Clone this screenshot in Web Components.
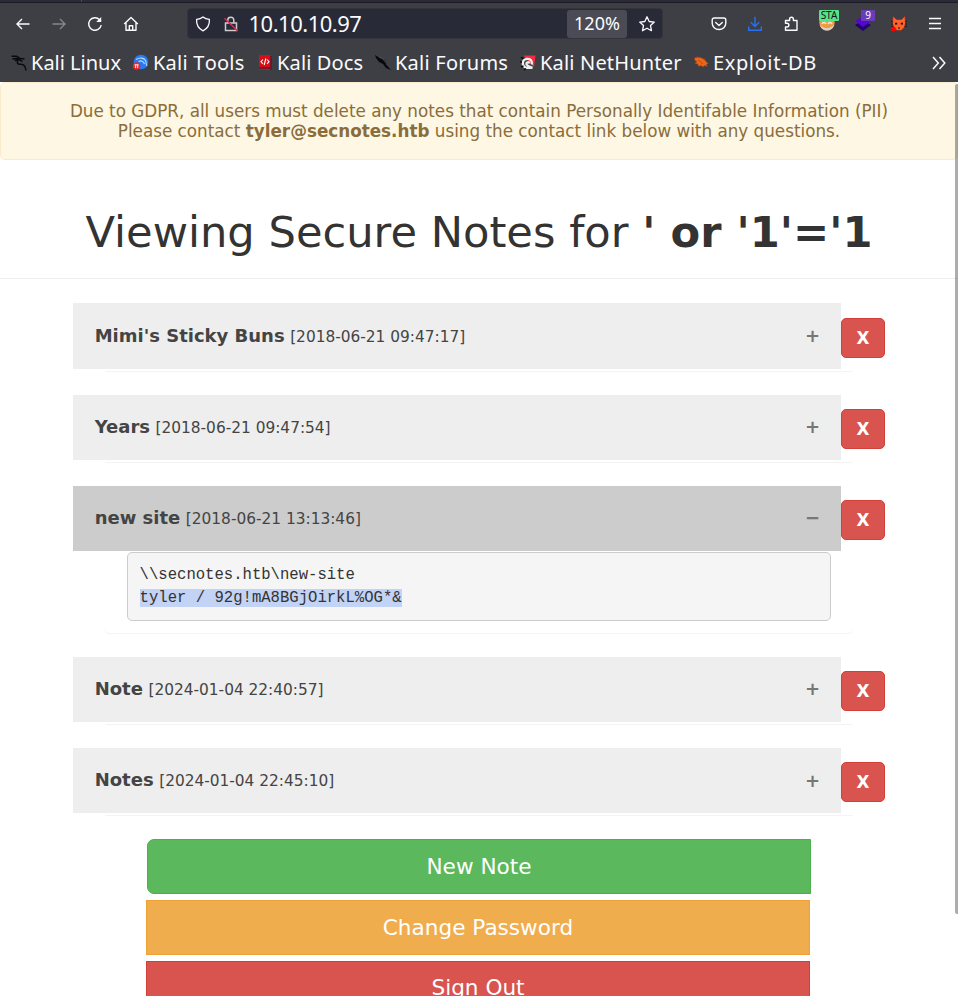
<!DOCTYPE html>
<html lang="en">
<head>
<meta charset="utf-8">
<title>Secure Notes</title>
<style>
html,body{margin:0;height:100%;overflow:hidden;background:#fff}
body{font-family:"DejaVu Sans",sans-serif}
</style>
</head>
<body>
<notes-app></notes-app>
<script>
const define=(name,html,setup)=>customElements.define(name,class extends HTMLElement{
  connectedCallback(){
    if(this.shadowRoot)return;
    const t=document.createElement('template');
    t.innerHTML=html;
    const content=t.content.cloneNode(true);
    if(setup)setup(this,content);
    this.attachShadow({mode:'open'}).append(content);
  }
});

const icons={
  back:'<path d="M14.5 8H2M7 3L2 8l5 5"/>',
  forward:'<path d="M1.5 8H14M9 3l5 5-5 5"/>',
  reload:'<path d="M14.2 9A6.3 6.3 0 1 1 12.6 3.7L14 5"/><path d="M14.2 1v5h-5z" fill="currentColor" stroke="none"/>',
  home:'<path d="M1.2 8L8 1.5 14.8 8M3 6.8V14.2H13V6.8M6.3 14V9.8h3.4V14" stroke-linejoin="round"/>',
  shield:'<path d="M8 .9C6 2.6 4 3.1 1.6 3.3C1.2 9.5 4.2 13 8 14.9C11.8 13 14.8 9.5 14.4 3.3C12 3.1 10 2.6 8 .9Z" stroke-linejoin="round" stroke-width="1.3"/>',
  lock:'<path d="M4.8 6.5V4.4a3 3 0 0 1 6-.4v2.5M2.5 7h11v7.5h-11z" stroke="#ccc" stroke-width="1.5"/><path d="M1.5 2.2l13 12.6" stroke="#e22850" stroke-width="1.5"/>',
  star:'<path d="M8 .8l2.2 4.7 5.1.6-3.8 3.5 1 5.1L8 12.2l-4.5 2.5 1-5.1L.7 6.1l5.1-.6z" stroke-linejoin="round" stroke-width="1.3"/>',
  pocket:'<path d="M3.2 2h9.6a2 2 0 0 1 2 2v3.2a6.8 6.3 0 0 1-13.6 0V4a2 2 0 0 1 2-2zM4.7 6.4L8 9.5l3.3-3.1" stroke-linejoin="round" stroke-linecap="round"/>',
  download:'<path d="M8 .8v9.7M3.8 6.3L8 10.5l4.2-4.2M1.7 10.5v3.7h12.6v-3.7"/>',
  puzzle:'<path d="M2.5 14.3V11H4a1.8 1.8 0 0 0 0-3.8H2.5V4.5H6.6V3.2a1.9 1.9 0 0 1 3.8 0V4.5H14v9.8z" stroke-linejoin="round"/>',
  menu:'<path d="M2 2.5h12M2 7.5h12M2 12.5h12" stroke-width="1.3"/>',
  more:'<path d="M2 2l5.3 6L2 14M8.500 2l5.300 6-5.300 6" stroke-width="1.500"/>',
  face:'<circle cx="8" cy="6.8" r="7.7" fill="#ee9b48" stroke="none"/><path d="M1 8.500c1.500 8 12.500 8 14 0-3.500 5-10.500 5-14 0z" fill="#d8d4ca" stroke="none"/><path d="M3 8c1-2 3-2 4 0M9 8c1-2 3-2 4 0" stroke="#f7e9d1"/>',
  layers:'<path d="M8 4.5l8 4.5-8 6-8-6z" fill="#21006f" stroke="none"/><path d="M8 0l8 5-8 6-8-6z" fill="#5707cc" stroke="none"/>',
  fox:'<path d="M2 0l3.500 3.500h5L14 0l.5 7.500L13 12l-3 2.500H6L3 12 1.500 7.500z" fill="#ff622d" stroke="#7d2915" stroke-width=".6"/><path d="M4 6.800h2.200v1.700H4zM9.800 6.800H12v1.700H9.800zM7 11.500h2v1H7z" fill="#111" stroke="none"/><path d="M0 5l2 1M0 8h2M0 10.500h2M16 5l-2 1M14 8h2M14 10.500h2" stroke="#151515" stroke-width=".8"/><circle cx="2.3" cy="13" r="2.5" fill="red" stroke="none"/>',
  linux:'<path d="M.5 1.200h5l3.500 2.300 4.500.3M1.500 4l4-.5 2.500 1M4 6c2.500-2 5-1.500 7.500.5M7 5.500c-2 2.500 0 4 3 3.800 3 0 4.500 2 5 6.200" fill="none" stroke="#08090c" stroke-width="1.5"/>',
  forums:'<path d="M0 0l4 2.500 3 1 3 2 1 4 5 5.500-5-2-3-4-4-2-3-4z" fill="#07080a" stroke="none"/><path d="M4 2l4 2 2 3" stroke="#596368" stroke-width=".7"/>',
  tools:'<circle cx="8" cy="7" r="7.300" fill="#267bf2" stroke="none"/><path d="M3 4.500c4-2.500 8-1.500 9.500 1 1 2 0 3 1.500 5.500M5.500 6.500c3-1.500 5 0 6 2.500" stroke="#b9dcff" stroke-width="1.1"/><circle cx="3.600" cy="11" r="3.800" fill="#ee2830" stroke="none"/><path d="M1.600 9.800h4M2.600 9.800v3.200M4.700 9.800v3.200" stroke="#fff" stroke-width=".9"/>',
  docs:'<path d="M2 0h12v15H2z" fill="#d90e14" stroke="none"/><path d="M14 1v14M2 13h12" stroke="#5b1833"/><path d="M6 4.500l-2 2.200L6 9M10 4.500l2 2.200L10 9M8.800 3.500L7.200 10" stroke="#fff" stroke-width="1.1"/>',
  nethunter:'<path d="M3.500.5h12L14 12 9 7z" fill="#f12c3d" stroke="none"/><path d="M12.500 12.800H6C1.500 11 2 5 6 4c4-.8 6.500 1.500 6 5.500M9.500 8.500c-.5-2-3.500-1.500-3 .8.3 1.700 3 2.500 6 3.500" stroke="#eee" stroke-width="2.300"/><path d="M1 2.500l2.500 1M0 7h2M1 12l2.500-1M4 15l2-1.500" stroke="#12070b"/>',
  exploit:'<path d="M1.500 3l3.500-.7C9 2.500 12 4.500 13.500 7.200l1.800 1.400-2 .7.8 2-3-.9-1 1.700-2-1.700-2.500.8-.8-2.200L2 8.300l2-1.700-2-1z" fill="#ed6516" stroke="#a64c25" stroke-width=".5"/><path d="M5 5l5 4M4 1l1 2M12 3l-1 2" stroke="#a74413" stroke-width=".7"/>'
};
define('ui-icon','<style>:host{display:block;width:16px;height:16px;flex:none}svg{display:block;width:100%;height:100%;overflow:visible}</style><svg viewBox="0 0 16 16" fill="none" stroke="currentColor" stroke-width="1.4"></svg>',
  (el,r)=>{r.querySelector('svg').innerHTML=icons[el.getAttribute('name')]});

define('book-mark',`<style>:host{display:flex;align-items:center;gap:4px;font-size:20px;white-space:nowrap;line-height:28px}</style><ui-icon></ui-icon><span><slot></slot></span>`,
  (el,r)=>r.querySelector('ui-icon').setAttribute('name',el.getAttribute('icon')));

define('ext-icon',`<style>:host{display:block;position:relative;width:16px;height:16px;flex:none}
span{position:absolute;top:-6px;left:var(--left);height:11px;width:var(--w);border-radius:1px;box-sizing:border-box;background:var(--badge);color:var(--ink);font:10px/11px "Noto Sans",sans-serif;text-align:center}</style><ui-icon></ui-icon><span><slot></slot></span>`,
  (el,r)=>r.querySelector('ui-icon').setAttribute('name',el.getAttribute('icon')));

define('browser-chrome',`<style>
:host{display:flex;flex-direction:column;height:82px;box-sizing:border-box;background:#3e3f44;color:#fbfbfe;font-family:"Noto Sans",sans-serif;font-kerning:none}
.tabs{height:3px;box-sizing:border-box;background:#2b2a37;border-bottom:1px solid #1c1b25;display:flex}
.tabs i{width:82px;border-right:1px solid #4a4a58;box-sizing:border-box}
.nav{height:41px;display:flex;align-items:center;padding:0 15px;box-sizing:border-box}
.left{display:flex;gap:20px;width:172px}
.url{display:flex;align-items:center;width:476px;height:31px;box-sizing:border-box;background:#292a37;border:1px solid #34343c;border-radius:4px;padding:0 7px}
.url b{font-weight:400;font-size:22px;line-height:28px;letter-spacing:-.5px;margin:-2px 0 0 9.500px;flex:1}
.zoom{box-sizing:border-box;width:60px;height:28px;background:#4a4b55;border-radius:3px;text-align:center;font-size:18px;line-height:27px;margin-right:12px}
.right{display:flex;align-items:center;gap:20px;margin-left:48px}
.marks{display:flex;align-items:center;height:38px;padding:0 11px;box-sizing:border-box}
.marks>ui-icon{margin-left:auto}
</style>
<div class="tabs"><i></i></div>
<div class="nav"><div class="left"><ui-icon name="back"></ui-icon><ui-icon name="forward" style="color:#85858a"></ui-icon><ui-icon name="reload"></ui-icon><ui-icon name="home"></ui-icon></div>
<div class="url"><ui-icon name="shield"></ui-icon><ui-icon name="lock" style="margin-left:12px"></ui-icon><b>10.10.10.97</b><span class="zoom">120%</span><ui-icon name="star"></ui-icon></div>
<div class="right"><ui-icon name="pocket"></ui-icon><ui-icon name="download" style="color:#2870f0"></ui-icon><ui-icon name="puzzle"></ui-icon>
<ext-icon icon="face" style="--left:0px;--w:20px;--badge:#57e389;--ink:#15141a">STA</ext-icon><ext-icon icon="layers" style="--left:6px;--w:14px;--badge:#693db8;--ink:#fff">9</ext-icon><ui-icon name="fox"></ui-icon><ui-icon name="menu"></ui-icon></div></div>
<div class="marks">
<book-mark icon="linux" style="width:122px">Kali Linux</book-mark><book-mark icon="tools" style="width:124px;letter-spacing:.24px">Kali Tools</book-mark><book-mark icon="docs" style="width:118px;letter-spacing:.14px">Kali Docs</book-mark><book-mark icon="forums" style="width:145px;letter-spacing:.24px">Kali Forums</book-mark><book-mark icon="nethunter" style="width:173px;letter-spacing:.18px">Kali NetHunter</book-mark><book-mark icon="exploit" style="letter-spacing:.62px">Exploit-DB</book-mark><ui-icon name="more"></ui-icon></div>`);

define('gdpr-alert',`<style>:host{display:block;box-sizing:border-box;height:78px;padding:18px 0 0;border:1px solid #faebcc;border-radius:5px;background:#fdf7e3;color:#8a6d3b;text-align:center;font-size:16.8px;line-height:20px;white-space:nowrap}</style><slot></slot>`);

define('page-header',`<style>:host{display:block;box-sizing:border-box;height:119px;padding-top:49px;border-bottom:1px solid #eee;text-align:center}h1{margin:0;font-size:43.2px;line-height:47.5px;font-weight:400;color:#333;white-space:nowrap}</style><h1><slot></slot></h1>`);

define('note-item',`<style>
:host{display:block;margin-bottom:24px;width:812px}
.row{display:flex;align-items:flex-start;height:65.2px}
.head{box-sizing:border-box;width:768px;height:65.2px;display:flex;align-items:center;padding:.4px 21px 0 21.7px;background:#eee;color:#444;white-space:pre;font-size:15.36px;line-height:24px}
:host([open]) .head{background:#ccc}
strong{font-size:18px}
.date{margin-left:.6px}
.sign{margin:-.4px 0 0 auto;color:#777;font-size:18px;font-weight:700;line-height:24px}
button{box-sizing:border-box;width:44px;height:40px;margin:14.4px 0 0;padding:0;border:1px solid #d43f3a;border-radius:5px;background:#d9534f;color:#fff;font:700 16.8px/24px "DejaVu Sans",sans-serif}
.panel{box-sizing:border-box;width:748px;margin-left:32px;height:2px;border-radius:5px;box-shadow:0 1px 1px rgba(0,0,0,.05)}
:host([open]) .panel{height:81.8px;padding:1.2px 22px 0}
</style><div class="row"><div class="head"><span><strong></strong> <span class="date"></span></span><span class="sign"></span></div><button>X</button></div><div class="panel"><slot></slot></div>`,
(el,r)=>{
  r.querySelector('strong').textContent=el.getAttribute('name');
  r.querySelector('.date').textContent='['+el.getAttribute('date')+']';
  r.querySelector('.sign').textContent=el.hasAttribute('open')?'\u2212':'+';
});

define('note-text',`<style>:host{display:block;box-sizing:border-box;width:704px;height:69px;padding:11px 11.6px;border:1px solid #ccc;border-radius:5px;background:#f5f5f5;color:#333}pre{margin:0;font:15.6px/22.5px "Liberation Mono",monospace}mark{background:#c2d3f5;color:inherit}</style><pre><slot></slot>
<mark><slot name="selected"></slot></mark></pre>`);

define('action-button',`<style>:host{display:block}button{display:block;box-sizing:border-box;width:664px;height:55px;border:1px solid var(--edge);border-radius:var(--r,0);background:var(--fill);color:#fff;font:21.6px/29px "DejaVu Sans",sans-serif;padding:0 0 var(--pb,0) 0}</style><button><slot></slot></button>`);

define('notes-app',`<style>
:host{display:block;height:996px;overflow:hidden;position:relative}
.list{padding:24.4px 0 0 73px}
.actions{display:flex;flex-direction:column;gap:6px;padding-left:146px;margin-top:-.2px}
.scroll{position:absolute;right:0;top:84px;width:3px;height:830px;border-radius:2px 0 0 2px;background:rgba(0,0,0,.32)}
</style>
<browser-chrome></browser-chrome>
<gdpr-alert>Due to GDPR, all users must delete any notes that contain Personally Identifable Information (PII)<br>Please contact <strong>tyler@secnotes.htb</strong> using the contact link below with any questions.</gdpr-alert>
<page-header>Viewing Secure Notes for <b>' or '1'='1</b></page-header>
<div class="list">
<note-item name="Mimi's Sticky Buns" date="2018-06-21 09:47:17"></note-item>
<note-item name="Years" date="2018-06-21 09:47:54"></note-item>
<note-item name="new site" date="2018-06-21 13:13:46" open><note-text>\\\\secnotes.htb\\new-site<span slot="selected">tyler / 92g!mA8BGjOirkL%OG*&amp;</span></note-text></note-item>
<note-item name="Note" date="2024-01-04 22:40:57"></note-item>
<note-item name="Notes" date="2024-01-04 22:45:10"></note-item>
</div>
<div class="actions">
<action-button style="--fill:#5cb85c;--edge:#4cae4c;--r:7px 0 0 7px;margin-left:1px">New Note</action-button>
<action-button style="--fill:#f0ad4e;--edge:#eea236">Change Password</action-button>
<action-button style="--fill:#d9534f;--edge:#d43f3a;--pb:2px">Sign Out</action-button>
</div>
<div class="scroll"></div>`);
</script>
</body>
</html>
